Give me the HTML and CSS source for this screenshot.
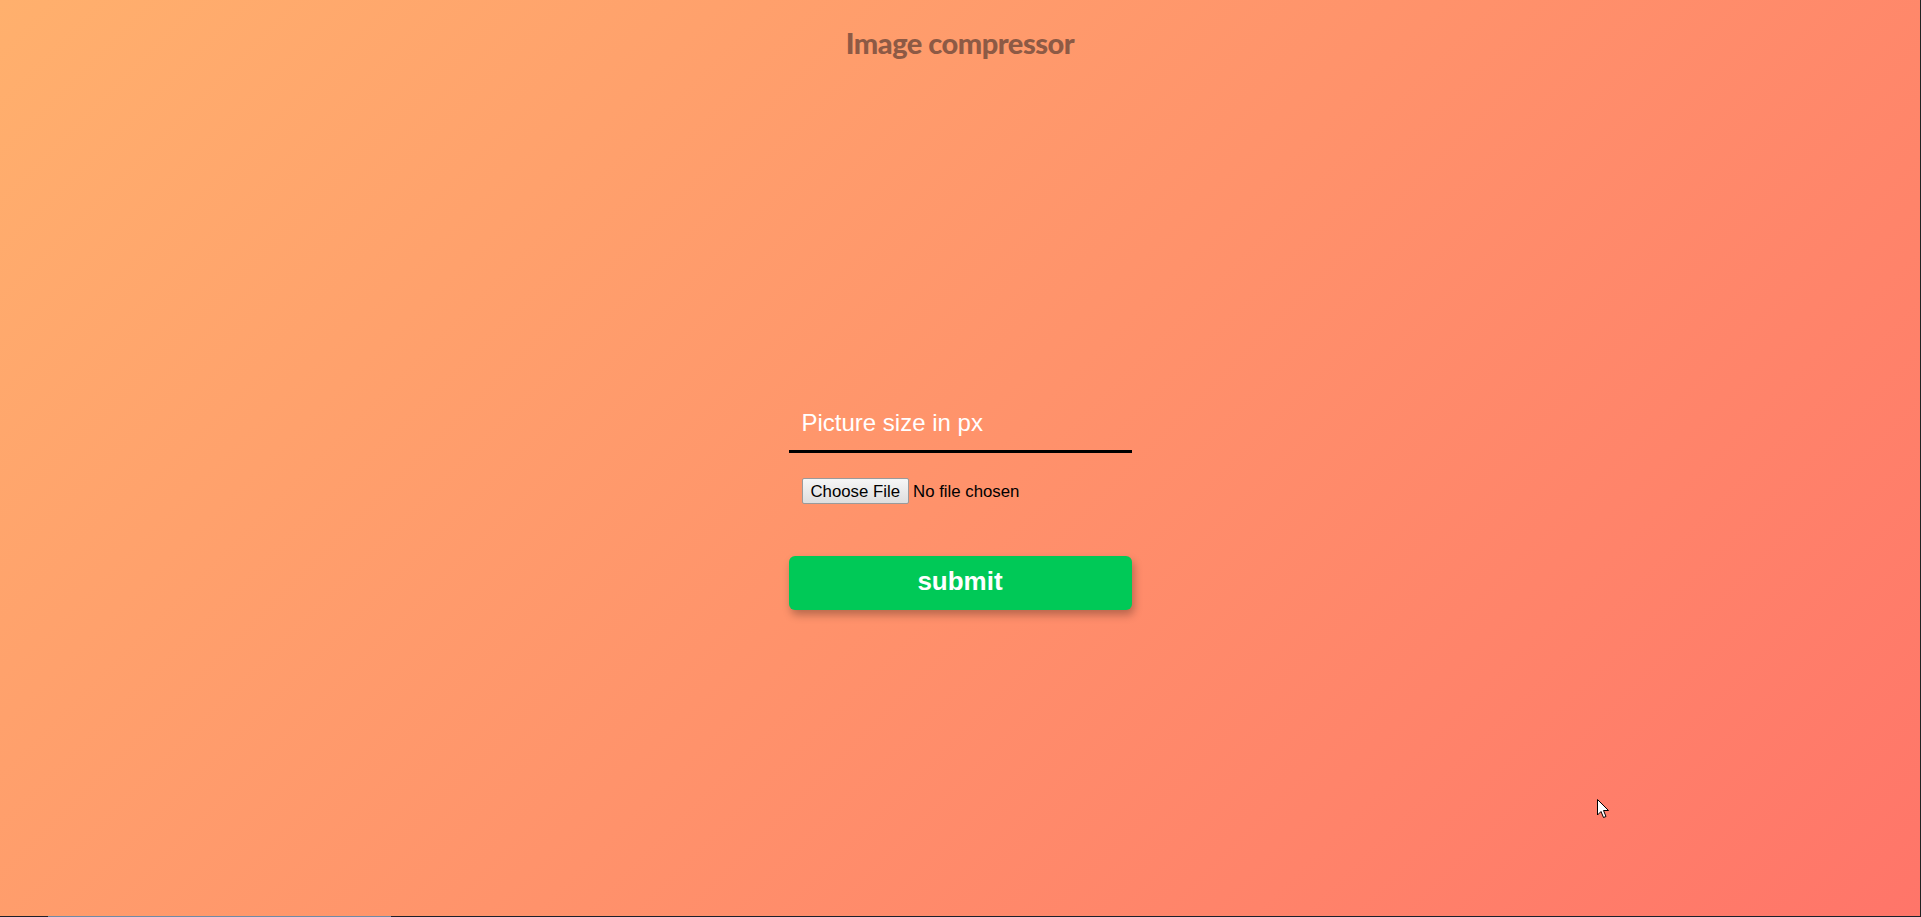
FILE: index.html
```html
<!DOCTYPE html>
<html lang="en">
<head>
<meta charset="utf-8">
<title>Image compressor</title>
<link rel="stylesheet" href="styles.css">
</head>
<body>
<div class="page">
  <header class="header">
    <h1 class="title">Image compressor</h1>
  </header>
  <main class="main">
    <form class="form">
      <input class="size-input" type="text" placeholder="Picture size in px">
      <div class="file-row">
        <input class="file-input" type="file">
      </div>
      <button class="submit" type="button">submit</button>
    </form>
  </main>
</div>
<div class="bottom-line"><span class="bottom-seg"></span></div>
<svg class="cursor" width="13" height="20" viewBox="0 0 13 20"><path d="M0.5 0.5 L0.5 16 L4 12.5 L6.5 18.5 L9 17.5 L6.5 11.5 L11.5 11.5 Z" fill="#fff" stroke="#000" stroke-width="1"/></svg>
</body>
</html>
```
FILE: styles.css
```css
html, body {
  margin: 0;
  padding: 0;
  height: 100%;
}
body {
  background: linear-gradient(135deg, #ffb06d 0%, #ff7569 100%);
  font-family: "Liberation Sans", Arial, sans-serif;
  display: flex;
  flex-direction: column;
  overflow: hidden;
  border-right: 1px solid #222;
  box-sizing: border-box;
}
.page {
  flex: 1;
  display: flex;
  flex-direction: column;
  align-items: center;
}
.header {
  padding-top: 23px;
}
.title {
  margin: 0;
  font-family: "Lato", sans-serif;
  font-weight: 900;
  font-size: 29px;
  line-height: 40px;
  color: #8d5a45;
  letter-spacing: -0.5px;
}
.main {
  padding-top: 338px;
}
.form {
  width: 343px;
  display: flex;
  flex-direction: column;
}
.size-input {
  box-sizing: border-box;
  height: 52px;
  width: 100%;
  padding: 0 13px 6px;
  border: none;
  border-bottom: 3px solid #000;
  background: transparent;
  font-family: "Liberation Sans", Arial, sans-serif;
  font-size: 24px;
  color: #fff;
  outline: none;
}
.size-input::placeholder {
  color: #fff;
  opacity: 1;
}
.file-row {
  padding: 25px 13px 0;
  display: flex;
}
.file-input {
  font-family: "Liberation Sans", Arial, sans-serif;
  font-size: 16.8px;
  line-height: 19px;
  color: #000;
}
.file-input::file-selector-button {
  font-family: "Liberation Sans", Arial, sans-serif;
  font-size: 16.8px;
  line-height: 19px;
  height: 26px;
  padding: 2px 8px;
  margin-right: 4px;
  border: 1px solid #9a9a9a;
  border-radius: 2px;
  background: linear-gradient(#f6f6f6, #dedede);
  color: #000;
}
.submit {
  margin-top: 52px;
  height: 54px;
  width: 100%;
  padding: 0 0 3px;
  border: none;
  border-radius: 6px;
  background: #00c957;
  color: #fff;
  font-family: "Liberation Sans", Arial, sans-serif;
  font-weight: bold;
  font-size: 26px;
  box-shadow: 2px 5px 8px rgba(0, 0, 0, 0.28);
  cursor: pointer;
}
.bottom-line {
  height: 1px;
  background: #1c1f2a;
  display: flex;
}
.bottom-seg {
  margin-left: 48px;
  width: 343px;
  background: #6f8aa6;
}
.cursor {
  position: absolute;
  left: 1597px;
  top: 799px;
}
```
